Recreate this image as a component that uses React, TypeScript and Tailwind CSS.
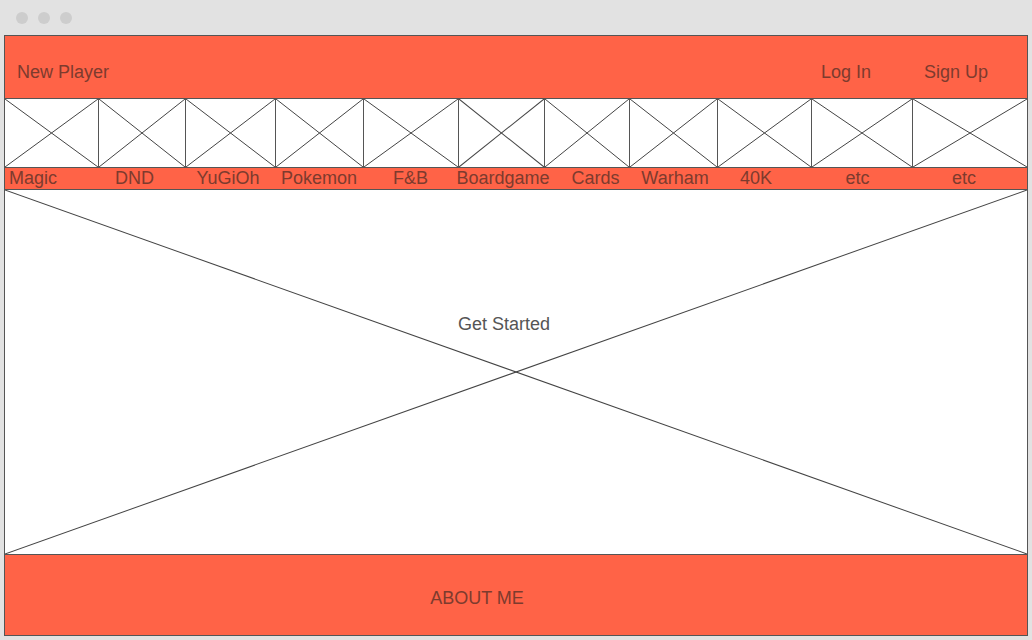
import React from "react";

// placeholder box: a rectangle crossed by two diagonals
const Cross = () => (
  <svg
    className="absolute inset-0 h-full w-full"
    viewBox="0 0 100 100"
    preserveAspectRatio="none"
  >
    <line x1="0" y1="0" x2="100" y2="100" stroke="#444" strokeWidth="1" vectorEffect="non-scaling-stroke" />
    <line x1="100" y1="0" x2="0" y2="100" stroke="#444" strokeWidth="1" vectorEffect="non-scaling-stroke" />
  </svg>
);

const categories = [
  { name: "Magic", cls: "justify-start pl-[4px]" },
  { name: "DND", cls: "justify-center -translate-x-[8px]" },
  { name: "YuGiOh", cls: "justify-center -translate-x-[3px]" },
  { name: "Pokemon", cls: "justify-center -translate-x-[1px]" },
  { name: "F&B", cls: "justify-center -translate-x-[1px]" },
  { name: "Boardgame", cls: "justify-center translate-x-[1px]" },
  { name: "Cards", cls: "justify-center translate-x-[8px]" },
  { name: "Warham", cls: "justify-center translate-x-[1px]" },
  { name: "40K", cls: "justify-center -translate-x-[9px]" },
  { name: "etc", cls: "justify-center -translate-x-[5px]" },
  { name: "etc", cls: "justify-center -translate-x-[6px]" },
];

const cols =
  "grid grid-cols-[94px_87px_90px_88px_95px_86px_85px_88px_94px_101px_1fr]";

const App = () => {
  return (
    <div
      className="flex h-[640px] w-[1032px] flex-col bg-[#e2e2e2] text-[18px]"
      style={{ fontFamily: '"Liberation Sans", Arial, sans-serif' }}
    >
      {/* window chrome */}
      <div className="flex h-[35px] shrink-0 items-center gap-[10px] pl-[16px]">
        <span className="h-[12px] w-[12px] rounded-full bg-[#cdcdcd]" />
        <span className="h-[12px] w-[12px] rounded-full bg-[#cdcdcd]" />
        <span className="h-[12px] w-[12px] rounded-full bg-[#cdcdcd]" />
      </div>

      <div className="mx-[4px] flex h-[601px] flex-col border border-[#555] bg-white">
        {/* top nav */}
        <div className="flex h-[62px] shrink-0 items-center bg-[#ff6347] pt-[10px] text-[#7d3b2e]">
          <span className="pl-[12px]">New Player</span>
          <span className="ml-auto">Log In</span>
          <span className="ml-[53px] mr-[39px]">Sign Up</span>
        </div>

        {/* game thumbnails */}
        <div className={`${cols} h-[70px] shrink-0 border-y border-[#555]`}>
          {categories.map((c, i) => (
            <div
              key={i}
              className={`relative ${i < categories.length - 1 ? "border-r border-[#555]" : ""}`}
            >
              <Cross />
            </div>
          ))}
        </div>

        {/* game labels */}
        <div className={`${cols} h-[22px] shrink-0 border-b border-[#555] bg-[#ff6347] leading-[21px] text-[#7d3b2e]`}>
          {categories.map((c, i) => (
            <div key={i} className={`flex whitespace-nowrap ${c.cls}`}>
              {c.name}
            </div>
          ))}
        </div>

        {/* hero */}
        <div className="relative flex h-[365px] shrink-0 justify-center border-b border-[#555] pr-[24px] pt-[124px] text-[#555]">
          <Cross />
          <span className="relative h-fit leading-[21px]">Get Started</span>
        </div>

        {/* footer */}
        <div className="flex flex-1 justify-center bg-[#ff6347] pr-[78px] pt-[33px] text-[#7d3b2e]">
          <span className="leading-[21px]">ABOUT ME</span>
        </div>
      </div>
    </div>
  );
};

export default App;
